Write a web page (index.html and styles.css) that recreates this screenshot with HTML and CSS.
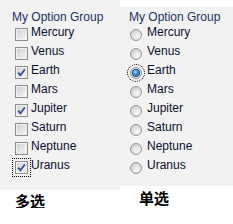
FILE: index.html
```html
<!DOCTYPE html>
<html>
<head>
<meta charset="utf-8">
<link rel="stylesheet" href="styles.css">
</head>
<body>
<div class="wrap">
  <div class="col col-left">
    <div class="panel panel-check">
      <div class="legend">My Option Group</div>
      <ul class="opts">
        <li class="opt"><span class="cb"></span><span class="lbl">Mercury</span></li>
        <li class="opt"><span class="cb"></span><span class="lbl">Venus</span></li>
        <li class="opt"><span class="cb checked"><svg viewBox="0 0 11 11" width="11" height="11"><path d="M2.2 5.6 L4.4 8.3 L8.8 2.4" fill="none" stroke="#34479a" stroke-width="1.7"/></svg></span><span class="lbl">Earth</span></li>
        <li class="opt"><span class="cb"></span><span class="lbl">Mars</span></li>
        <li class="opt"><span class="cb checked"><svg viewBox="0 0 11 11" width="11" height="11"><path d="M2.2 5.6 L4.4 8.3 L8.8 2.4" fill="none" stroke="#34479a" stroke-width="1.7"/></svg></span><span class="lbl">Jupiter</span></li>
        <li class="opt"><span class="cb"></span><span class="lbl">Saturn</span></li>
        <li class="opt"><span class="cb"></span><span class="lbl">Neptune</span></li>
        <li class="opt"><span class="cb checked focus"><svg viewBox="0 0 11 11" width="11" height="11"><path d="M2.2 5.6 L4.4 8.3 L8.8 2.4" fill="none" stroke="#34479a" stroke-width="1.7"/></svg></span><span class="lbl">Uranus</span></li>
      </ul>
    </div>
    <div class="caption caption-left">多选</div>
  </div>
  <div class="col col-right">
    <div class="panel panel-radio">
      <div class="legend">My Option Group</div>
      <ul class="opts">
        <li class="opt"><span class="rb"></span><span class="lbl">Mercury</span></li>
        <li class="opt"><span class="rb"></span><span class="lbl">Venus</span></li>
        <li class="opt"><span class="rb checked focus"><span class="dot"></span></span><span class="lbl">Earth</span></li>
        <li class="opt"><span class="rb"></span><span class="lbl">Mars</span></li>
        <li class="opt"><span class="rb"></span><span class="lbl">Jupiter</span></li>
        <li class="opt"><span class="rb"></span><span class="lbl">Saturn</span></li>
        <li class="opt"><span class="rb"></span><span class="lbl">Neptune</span></li>
        <li class="opt"><span class="rb"></span><span class="lbl">Uranus</span></li>
      </ul>
    </div>
    <div class="caption caption-right">单选</div>
  </div>
</div>
</body>
</html>
```

FILE: styles.css
```css
html, body {
  margin: 0;
  padding: 0;
  background: #ffffff;
}
body {
  font-family: "Liberation Sans", Arial, sans-serif;
  font-size: 12px;
}
.wrap {
  display: flex;
  align-items: flex-start;
  width: 233px;
}
.col-left {
  width: 120px;
}
.col-right {
  width: 113px;
}
.panel {
  background: #f2f2f2;
  box-sizing: border-box;
}
.panel-check {
  height: 190px;
  padding: 11px 0 0 12px;
}
.panel-radio {
  margin-top: 7px;
  height: 179px;
  padding: 4px 0 0 9px;
}
.legend {
  line-height: 13px;
  color: #1a3164;
  margin-bottom: 2px;
  white-space: nowrap;
}
.opts {
  list-style: none;
  margin: 0;
  padding: 0;
}
.panel-check .opts {
  padding-left: 3px;
}
.panel-radio .opts {
  padding-left: 1px;
}
.opt {
  display: flex;
  align-items: flex-start;
  height: 19px;
}
.lbl {
  line-height: 13px;
  color: #0c1030;
  white-space: nowrap;
}
.cb {
  width: 13px;
  height: 13px;
  margin-top: 2px;
  box-sizing: border-box;
  border: 1px solid #8e8e8e;
  background: linear-gradient(135deg, #cdcdcd 0%, #e4e4e4 50%, #f8f8f8 100%);
  box-shadow: inset 0 0 0 1px #f2f2f2;
  display: flex;
  align-items: center;
  justify-content: center;
  flex: none;
}
.cb svg {
  display: block;
}
.cb + .lbl {
  margin-left: 3px;
}
.rb {
  width: 12px;
  height: 12px;
  margin-top: 3px;
  box-sizing: border-box;
  border-radius: 50%;
  border: 1px solid #999999;
  background: radial-gradient(circle at 65% 70%, #fafafa 0%, #e2e2e2 45%, #c4c4c4 100%);
  display: flex;
  align-items: center;
  justify-content: center;
  flex: none;
}
.rb + .lbl {
  margin-left: 5px;
}
.dot {
  width: 6px;
  height: 6px;
  border-radius: 50%;
  background: radial-gradient(circle at 40% 35%, #b9e2ff 0%, #3b8ee0 40%, #0c3f86 100%);
  box-shadow: 0 0 0 1px #1a4f8f;
}
.focus {
  outline: 1px dotted #000;
  outline-offset: 2px;
}
.caption {
  font-family: "Noto Sans CJK SC", "Liberation Sans", sans-serif;
  font-weight: bold;
  font-size: 15px;
  line-height: 15px;
  color: #000;
}
.caption-left {
  margin-top: 3px;
  padding-left: 15px;
}
.caption-right {
  margin-top: 4px;
  padding-left: 19px;
}
```
